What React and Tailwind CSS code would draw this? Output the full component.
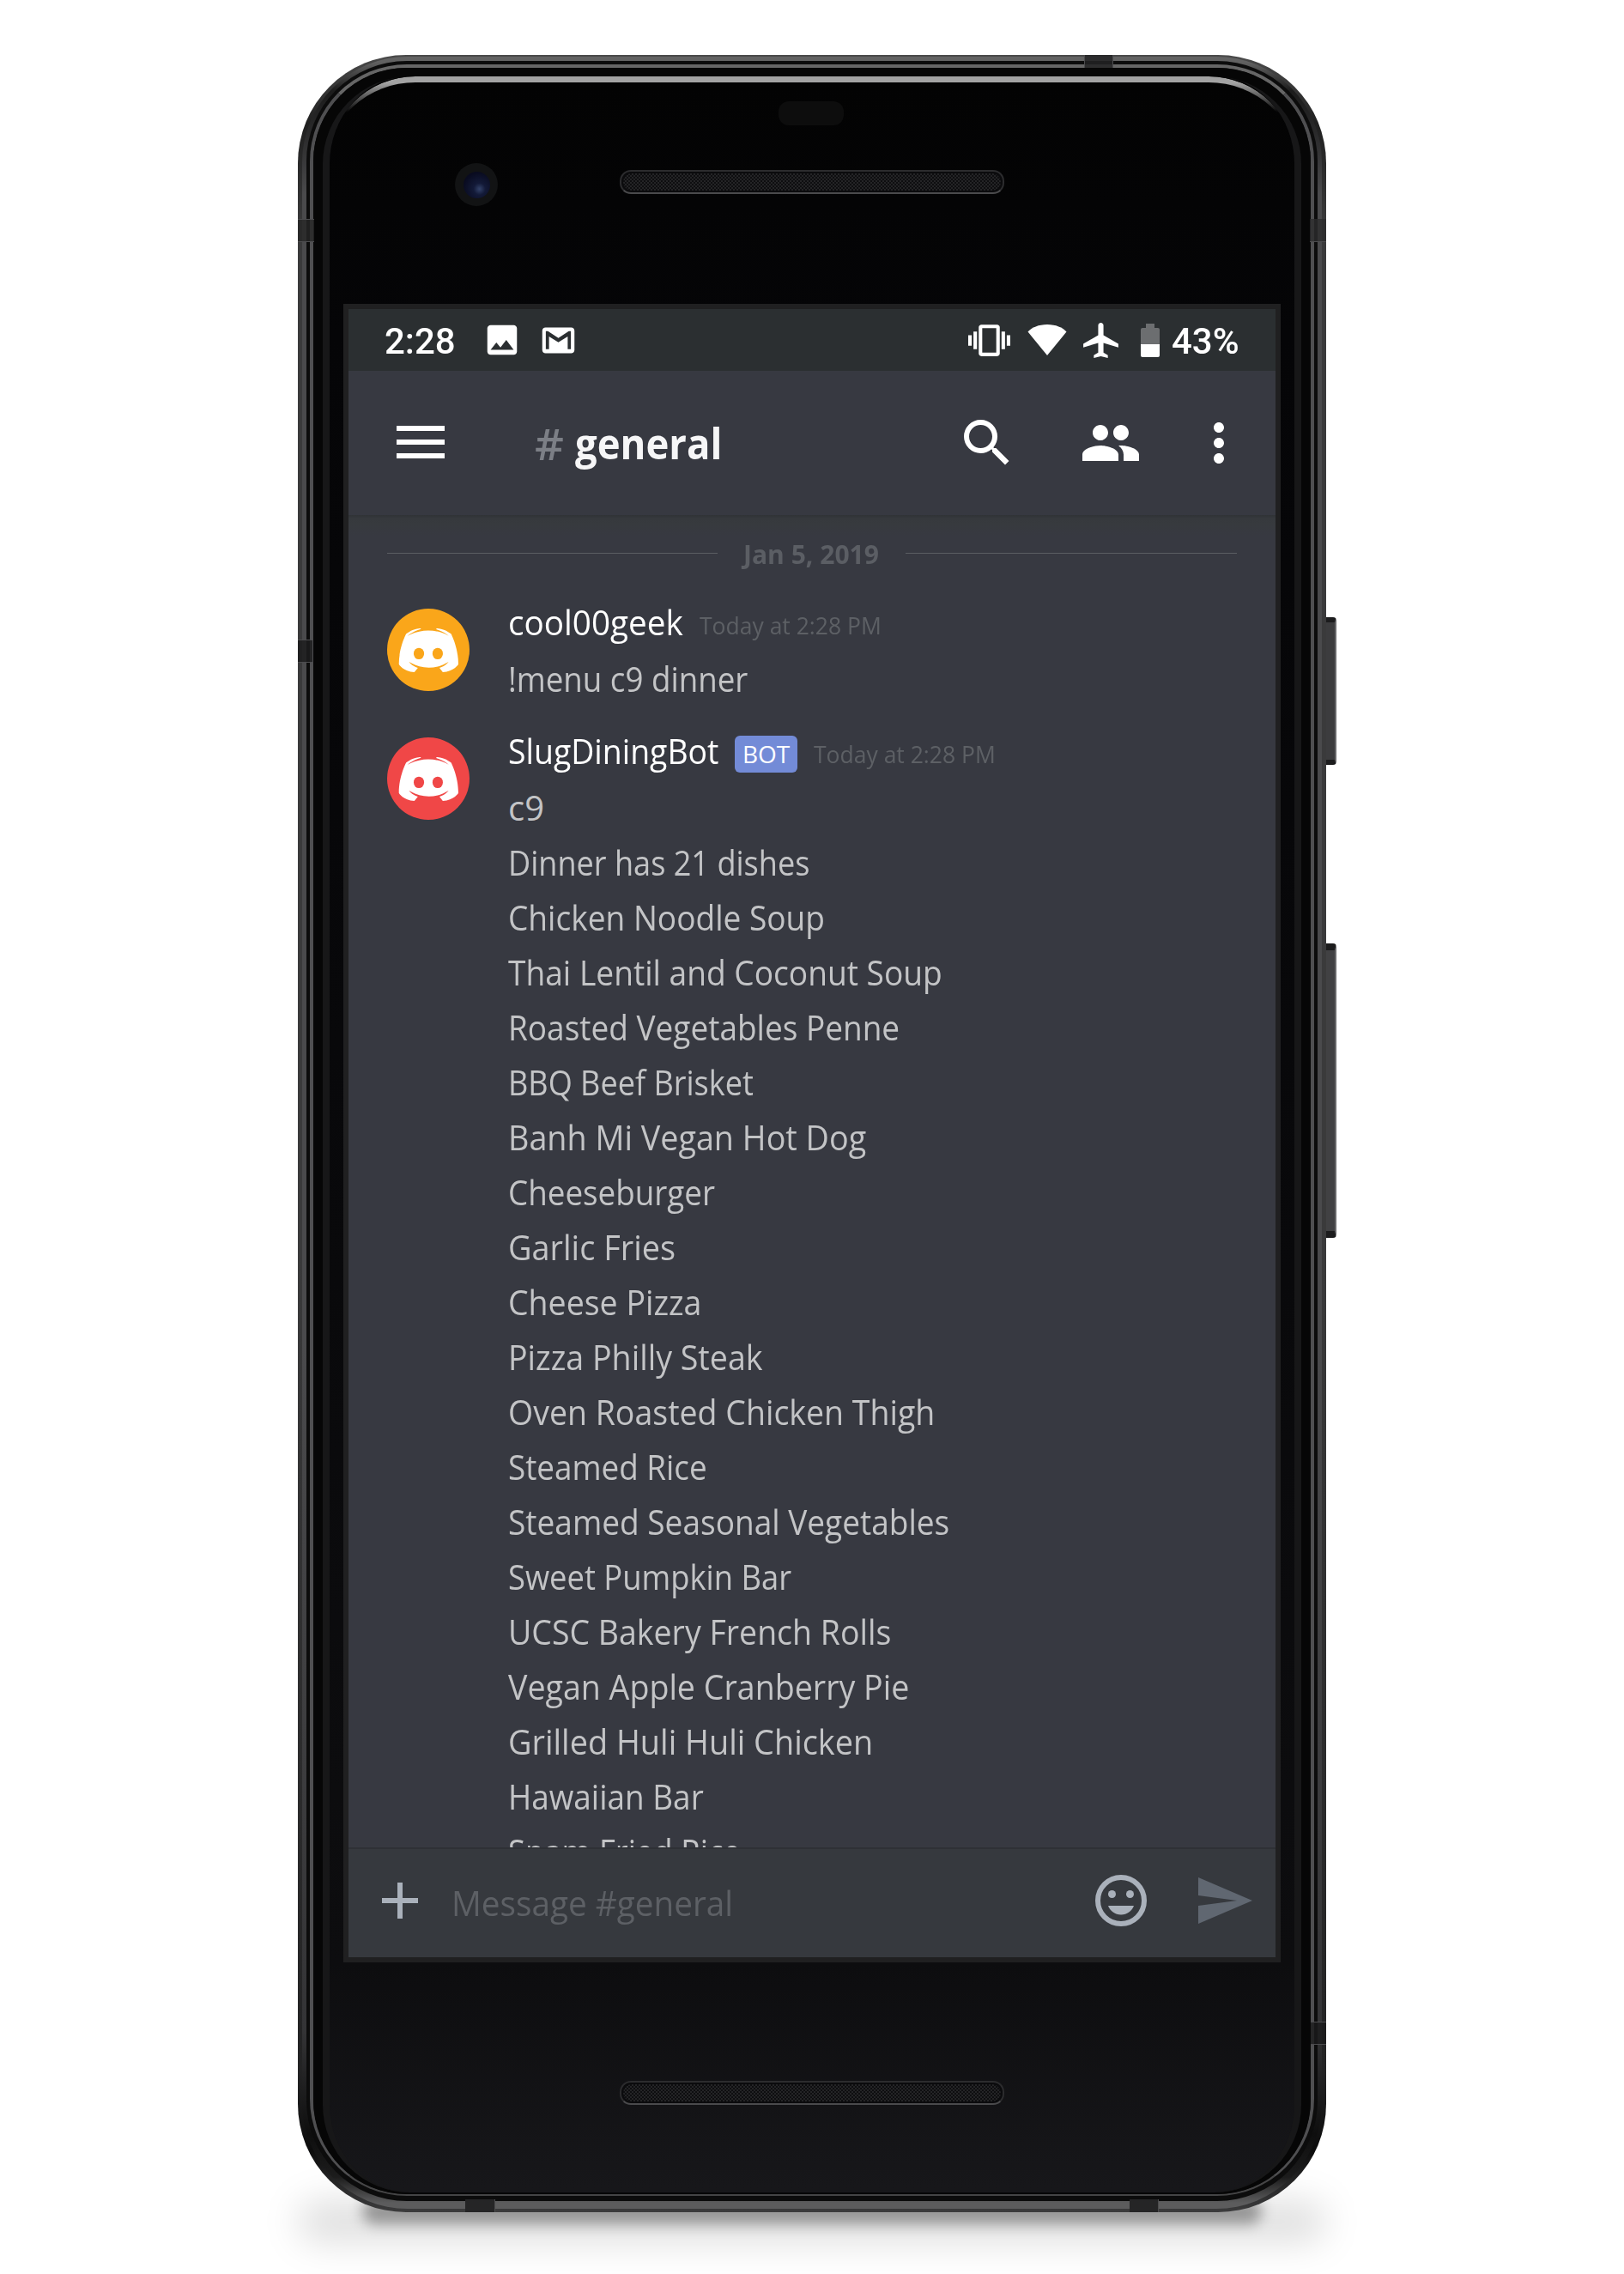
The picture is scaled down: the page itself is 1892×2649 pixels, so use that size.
import React, { useLayoutEffect, useRef } from "react";
import {
  MdAirplanemodeActive,
  MdImage,
  MdMoreVert,
  MdPeople,
  MdSearch,
  MdSend,
  MdVibration,
} from "react-icons/md";

const LINES = [
  ["c9", 42],
  ["Dinner has 21 dishes", 351],
  ["Chicken Noodle Soup", 369],
  ["Thai Lentil and Coconut Soup", 506],
  ["Roasted Vegetables Penne", 456],
  ["BBQ Beef Brisket", 286],
  ["Banh Mi Vegan Hot Dog", 417],
  ["Cheeseburger", 241],
  ["Garlic Fries", 195],
  ["Cheese Pizza", 225],
  ["Pizza Philly Steak", 297],
  ["Oven Roasted Chicken Thigh", 497],
  ["Steamed Rice", 232],
  ["Steamed Seasonal Vegetables", 514],
  ["Sweet Pumpkin Bar", 330],
  ["UCSC Bakery French Rolls", 446],
  ["Vegan Apple Cranberry Pie", 467],
  ["Grilled Huli Huli Chicken", 425],
  ["Hawaiian Bar", 228],
  ["Spam Fried Rice", 271],
];

/* One line of text, condensed or widened to an exact width. */
function Fit({ width, className = "", children }) {
  const ref = useRef(null);
  useLayoutEffect(() => {
    const el = ref.current;
    const fit = () => {
      el.style.transform = "none";
      el.style.transform = `scaleX(${width / el.offsetWidth})`;
    };
    fit();
    document.fonts?.ready.then(fit);
  }, [width]);
  return (
    <span className={`inline-block shrink-0 whitespace-nowrap ${className}`} style={{ width }}>
      <span ref={ref} className="inline-block origin-left">
        {children}
      </span>
    </span>
  );
}

function Avatar({ color }) {
  return (
    <div
      className="mt-[8px] flex h-24 w-24 shrink-0 items-center justify-center rounded-full"
      style={{ backgroundColor: color }}
    >
      <svg viewBox="72.96 119.3 302.08 215.1" className="h-[51px] w-[70px]" preserveAspectRatio="none">
        <path
          fill="#fff"
          d="M375.04 295.424c0-82.432-36.864-149.248-36.864-149.248-36.864-27.648-71.936-26.88-71.936-26.88l-3.584 4.096c43.52 13.312 63.744 32.512 63.744 32.512-60.811-33.329-132.244-33.335-191.232-7.424-9.472 4.352-15.104 7.424-15.104 7.424s21.248-20.224 67.328-33.536l-2.56-3.072s-35.072-.768-71.936 26.88c0 0-36.864 66.816-36.864 149.248 0 0 21.504 37.12 78.08 38.912 0 0 9.472-11.52 17.152-21.248-32.512-9.728-44.8-30.208-44.8-30.208 3.766 2.636 9.976 6.053 10.496 6.4 43.21 24.198 104.588 32.126 159.744 8.96 8.96-3.328 18.944-8.192 29.44-15.104 0 0-12.8 20.992-46.336 30.464 7.68 9.728 16.896 20.736 16.896 20.736 56.576-1.792 78.336-38.912 78.336-38.912z"
        />
        <ellipse cx="176.6" cy="243.2" rx="26.1" ry="28.4" fill={color} />
        <ellipse cx="271.1" cy="243.2" rx="26.1" ry="28.4" fill={color} />
      </svg>
    </div>
  );
}

function Message({ color, name, nameWidth, bot, lines }) {
  return (
    <div className="flex pl-[45px]">
      <Avatar color={color} />
      <div className="ml-[45px] flex flex-col font-[450]">
        <div className="flex h-[58px] items-baseline text-[40px] font-medium leading-[48px] text-white">
          <Fit width={nameWidth}>{name}</Fit>
          {bot && (
            <span className="relative -top-px ml-[19px] flex h-[43px] w-[73px] justify-center rounded-[6px] bg-[#738bd7] text-[28px] leading-[43px]">
              <Fit width={55}>BOT</Fit>
            </span>
          )}
          <Fit width={212} className="relative -top-px ml-[19px] text-[28px] font-[450] text-[#5d6065]">
            Today at 2:28 PM
          </Fit>
        </div>
        {lines.map(([text, width]) => (
          <div key={text} className="h-16 text-[40px] leading-[64px] text-[#c3c4c6]">
            <Fit width={width}>{text}</Fit>
          </div>
        ))}
      </div>
    </div>
  );
}

function StatusBar() {
  return (
    <div className="flex h-[72px] items-center bg-[#2b2f31] pl-[42px] pr-[42px] font-[Roboto] text-[43px] font-medium text-white">
      <Fit width={83} className="mt-[2px] leading-[50px]">2:28</Fit>
      <MdImage className="ml-[31px] h-[46px] w-[46px]" />
      <svg viewBox="0 0 24 24" className="ml-[20px] h-[45px] w-[45px]" fill="currentColor">
        <path d="M20 4H4c-1.100 0-2 .9-2 2v12c0 1.100.9 2 2 2h16c1.100 0 2-.9 2-2V6c0-1.100-.9-2-2-2zm-.2 13.500h-2V9.600L12 13.200 6.200 9.600v7.900h-2V6.200h1.300L12 10.500l6.500-4.300h1.300z" />
      </svg>
      <MdVibration className="ml-auto h-[49px] w-[49px]" />
      <svg viewBox="0 0 46 36" className="ml-[20px] h-[36px] w-[46px]" fill="currentColor">
        <path d="M23 36 L0.500 8.500 C5 3.500 13 0 23 0 C33 0 41 3.500 45.500 8.500 Z" />
      </svg>
      <MdAirplanemodeActive className="ml-[15px] h-[49px] w-[49px]" />
      <svg viewBox="0 0 22 39" className="ml-[22px] h-[39px] w-[22px]">
        <path d="M6 0h10v5h4q2 0 2 2v17H0V7q0-2 2-2h4z" fill="#6c6e70" />
        <path d="M0 24h22v13q0 2-2 2H2q-2 0-2-2z" fill="#fff" />
      </svg>
      <Fit width={79} className="ml-[14px] mt-[2px] leading-[50px]">43%</Fit>
    </div>
  );
}

function Header() {
  return (
    <div className="flex h-[168px] items-center bg-[#373941] pl-[56px] pr-[4px] text-white">
      <div className="-mt-[2px] flex w-[56px] flex-col gap-[10px]">
        <div className="h-[6px] bg-white" />
        <div className="h-[6px] bg-white" />
        <div className="h-[6px] bg-white" />
      </div>
      <Fit width={34} className="ml-[105px] text-[51px] font-semibold leading-[60px] text-[#7c7f86]">#</Fit>
      <Fit width={171} className="ml-[13px] text-[50px] font-bold leading-[60px] text-[#f6f6f7]">general</Fit>
      <MdSearch className="ml-auto h-[72px] w-[72px]" />
      <MdPeople className="ml-[72px] h-[72px] w-[72px]" />
      <MdMoreVert className="ml-[54px] mr-[26px] h-[72px] w-[72px]" />
    </div>
  );
}

function InputBar() {
  return (
    <div className="flex h-[128px] items-center border-t-2 border-[#2f3136] bg-[#36393e] pl-[39px] pr-[24px]">
      <svg viewBox="0 0 42 42" className="-mt-[6px] h-[42px] w-[42px]" fill="#aab1bb">
        <path d="M18 0h6v18h18v6H24v18h-6V24H0v-6h18z" />
      </svg>
      <Fit width={328} className="ml-[39px] text-[40px] font-[450] leading-[60px] text-[#5d6065]">
        Message #general
      </Fit>
      <svg viewBox="0 0 60 60" className="-mt-[6px] ml-auto h-[60px] w-[60px]" fill="#aab1bb">
        <circle cx="30" cy="30" r="27" fill="none" stroke="#aab1bb" strokeWidth="6" />
        <circle cx="19.5" cy="22.5" r="4.5" />
        <circle cx="40.500" cy="22.500" r="4.500" />
        <path d="M15 36h30c-2.300 6.200-8 10.500-15 10.500S17.300 42.200 15 36z" />
      </svg>
      <MdSend className="-mt-[6px] ml-[54px] h-[72px] w-[72px] text-[#606771]" />
    </div>
  );
}

function Screen() {
  return (
    <div className="flex h-[1932px] w-[1092px] flex-col overflow-hidden border-6 border-[#202021] bg-[#373941] font-['Open_Sans',sans-serif]">
      <StatusBar />
      <Header />
      <div className="flex h-[1552px] flex-col overflow-hidden bg-[linear-gradient(#303336_0px,#36393d_4px,#373a3e_10px,#373941_24px)]">
        <div className="flex h-[88px] shrink-0 items-center pl-[45px] pr-[45px]">
          <div className="h-px flex-1 bg-[#5b5e62]" />
          <Fit width={158} className="ml-[30px] mr-[31px] mt-[2px] text-[31px] font-bold leading-[40px] text-[#5b5e64]">
            Jan 5, 2019
          </Fit>
          <div className="h-px w-[386px] bg-[#5b5e62]" />
        </div>
        <div className="mt-[13px] flex flex-col gap-[28px]">
          <Message color="#faa61a" name="cool00geek" nameWidth={204} lines={[["!menu c9 dinner", 279]]} />
          <Message color="#f04747" name="SlugDiningBot" nameWidth={245} bot lines={LINES} />
        </div>
      </div>
      <InputBar />
    </div>
  );
}

function Speaker() {
  return (
    <div className="h-[28px] w-[448px] rounded-[13px] border-2 border-[#2c2c2e] border-b-[#4a4a4c] bg-[#0b0b0d] p-[2px]">
      <div className="h-full rounded-[10px] bg-[repeating-conic-gradient(#242426_0_25%,#0e0e10_0_50%)] bg-[length:4px_4px]" />
    </div>
  );
}

/* Antenna line inlaid into the metal rim. */
function Band({ className }) {
  return <div className={`absolute border-[#4c4c4e] ${className}`} />;
}

function Phone() {
  return (
    <div className="relative h-[2513px] w-[1198px]">
      <div className="absolute -bottom-[14px] left-[75px] right-[75px] h-[30px] rounded-full bg-black/35 blur-[8px]" />
      <div className="absolute -bottom-[36px] left-[0px] right-[0px] h-[50px] rounded-full bg-black/12 blur-[20px]" />
      <div className="absolute left-[1190px] top-[655px] h-[172px] w-[20px] rounded-[4px] border-y-6 border-r-2 border-y-[#1c1c1d] border-r-[#69696b] bg-[#3c3c3e]" />
      <div className="absolute left-[1190px] top-[1035px] h-[343px] w-[20px] rounded-[4px] border-y-8 border-r-2 border-y-[#1c1c1d] border-r-[#69696b] bg-[#414143]" />

      <div className="absolute inset-0 rounded-[126px] bg-[linear-gradient(#4a4a4a_0,#202020_80px,#3a3a3b_200px,#3a3a3b_1400px,#232324_2350px,#0c0c0c_2440px,#3c3c3d_2513px)]" />
      <div className="absolute inset-x-[5px] bottom-[4px] top-[2px] rounded-[123px] bg-[linear-gradient(#626262_0,#626262_6px,#1c1c1c_40px,#2a2a2b_90px,#4a4a4c_160px,#4a4a4c_1500px,#343436_2300px,#0e0e0e_2420px,#1c1c1c_2470px,#5c5c5d_2500px)]" />
      <div className="absolute inset-x-[10px] bottom-[13px] top-[7px] rounded-[117px] bg-[#0c0c0c]" />
      <div className="absolute inset-x-[14px] bottom-[19px] top-[11px] rounded-[113px] border-x-4 border-b-2 border-t-4 border-x-[#4f4f51] border-b-[#454546] border-t-[#666]" />
      <div className="absolute inset-x-[18px] bottom-[21px] top-[15px] rounded-[109px] bg-[#060606]" />
      <div className="absolute inset-x-[29px] bottom-[23px] top-[25px] rounded-[102px] border-x-8 border-x-[#171718] bg-[linear-gradient(#030303_0,#050507_300px,#09090b_1400px,#0d0d0f_2200px,#17171a_2460px)] bg-origin-border" />
      <div className="absolute inset-x-[35px] top-[25px] h-[240px] rounded-t-[102px] border-t-7 border-t-[#a3a3a3] [mask-image:linear-gradient(black_8px,transparent_42px)]" />

      <Band className="left-0 top-[191px] h-[27px] w-[19px] border-y bg-[#252526]/80" />
      <Band className="left-0 top-[681px] h-[27px] w-[17px] border-y bg-[#1c1c1d]/85" />
      <Band className="right-0 top-[191px] h-[27px] w-[19px] border-b bg-[#2c2c2d]/80" />
      <Band className="right-0 top-[2291px] h-[27px] w-[18px] border-y bg-[#1a1a1b]/80" />
      <Band className="left-[916px] top-0 h-[15px] w-[34px] border-x bg-[#232324]/85" />
      <Band className="bottom-0 left-[195px] h-[15px] w-[35px] border-r bg-[#252526]" />
      <Band className="bottom-0 left-[969px] h-[15px] w-[34px] border-r bg-[#252526]" />

      <div className="absolute left-[560px] top-[54px] h-[28px] w-[76px] rounded-[12px] bg-[#0d0d0d]" />
      <div className="absolute left-[183px] top-[126px] flex h-[50px] w-[50px] items-center justify-center rounded-full bg-[#121314]">
        <div className="h-[31px] w-[31px] rounded-full bg-[radial-gradient(circle_at_60%_65%,#34436a_0,#131a38_25%,#090b20_70%,#0a0a18_100%)]" />
      </div>

      <div className="relative flex flex-col items-center">
        <div className="flex h-[290px] items-start pt-[134px]">
          <Speaker />
        </div>
        <Screen />
        <div className="pt-[138px]">
          <Speaker />
        </div>
      </div>
    </div>
  );
}

export default function App() {
  return (
    <div className="h-[2649px] w-[1892px] overflow-hidden bg-white pl-[347px] pt-[64px]">
      <Phone />
    </div>
  );
}
